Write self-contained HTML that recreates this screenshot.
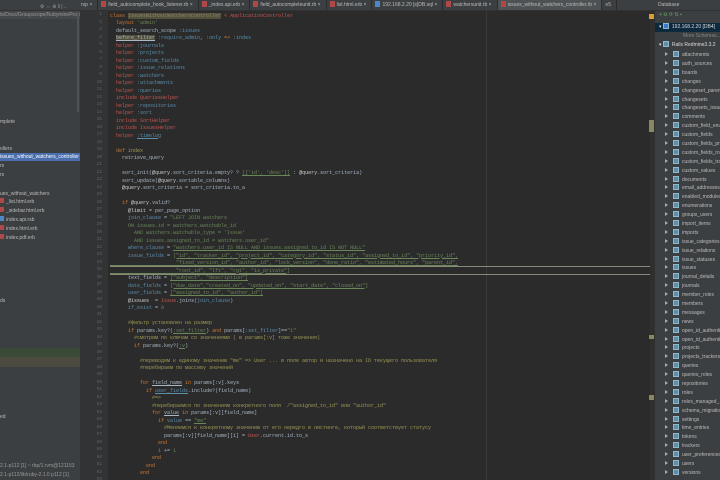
<!DOCTYPE html>
<html><head><meta charset="utf-8"><style>
*{margin:0;padding:0;box-sizing:border-box}
html{width:720px;height:480px;overflow:hidden}
body{width:720px;height:480px;overflow:hidden;background:#2b2b2b;font-family:"Liberation Sans","DejaVu Sans",sans-serif;position:relative}
.abs{position:absolute}
#left{left:0;top:0;width:80px;height:480px;background:#3c3f41;overflow:hidden;color:#bbb;font-size:5px}
#left div.r{position:absolute;left:0;height:8px;line-height:8px;white-space:nowrap}
#tabs{left:80px;top:0;width:575px;height:11px;background:#3c3f41;border-bottom:1px solid #323232;white-space:nowrap;overflow:hidden;font-size:5px;color:#bbb;line-height:11px}
#tabs span{display:inline-block;padding:0 5px 0 3px;border-right:1px solid #2b2b2b}
#tabs i{display:inline-block;width:5px;height:6px;background:#b04848;margin-right:2px;vertical-align:-1px}
#gut{left:80px;top:11px;width:28px;height:469px;background:#313335;font-family:"Liberation Mono",monospace;font-size:4.5px;color:#606366;text-align:right;overflow:hidden}
#gut div{height:7.5px;line-height:7.5px;padding-right:6px}
#code{left:110px;top:12.5px;width:540px;height:468px;overflow:hidden;font-family:"Liberation Mono","DejaVu Sans Mono","Noto Sans CJK SC",monospace;font-size:5px;color:#a9b7c6}
#code div{height:7.5px;line-height:7.5px;white-space:pre;overflow:hidden}
.k{color:#cc7832}.h{color:#c75450}.s{color:#5a8fae}.g{color:#6a8759}.c{color:#a09a55}.w{color:#d0d0d0}.u{text-decoration:underline}
#right{left:655px;top:0;width:65px;height:480px;background:#3c3f41;font-size:5px;color:#bbb;overflow:hidden}
#right .r{position:absolute;left:0;height:9px;line-height:9px;white-space:nowrap}
.ti{display:inline-block;width:6px;height:6px;background:#5f8fa8;border:1px solid #8fb8cc;vertical-align:-1px;margin-right:3px}
.ar{display:inline-block;width:0;height:0;border-left:3px solid #aaa;border-top:2px solid transparent;border-bottom:2px solid transparent;margin:0 5px 0 10px}
</style></head><body>
<div id="left" class="abs">
 <div style="position:absolute;left:0;top:0;width:80px;height:11px;background:#3c3f41;border-bottom:1px solid #323232"></div>
 <div class="r" style="top:3px;left:40px;color:#999">⚙ ⇔ ⊕ ‖ |←</div>
 <div class="r" style="top:11px;width:80px;color:#999;background:#45484a">ts/Docs/Groupscope/RubymineProjects</div>
 <div class="r" style="top:118px">mplete</div>
 <div class="r" style="top:145px">ollers</div>
 <div class="r" style="top:153px;width:80px;background:#4b6eaf;color:#fff">issues_without_watchers_controller</div>
 <div class="r" style="top:162px">rs</div>
 <div class="r" style="top:171px">rs</div>
 <div class="r" style="top:190px">ues_without_watchers</div>
 <div class="r" style="top:198px"><i style="display:inline-block;width:4px;height:5px;background:#b04848;margin-right:2px"></i>_list.html.erb</div>
 <div class="r" style="top:207px"><i style="display:inline-block;width:4px;height:5px;background:#b04848;margin-right:2px"></i>_sidebar.html.erb</div>
 <div class="r" style="top:216px"><i style="display:inline-block;width:4px;height:5px;background:#4a88c7;margin-right:2px"></i>index.api.rsb</div>
 <div class="r" style="top:225px"><i style="display:inline-block;width:4px;height:5px;background:#b04848;margin-right:2px"></i>index.html.erb</div>
 <div class="r" style="top:234px"><i style="display:inline-block;width:4px;height:5px;background:#b04848;margin-right:2px"></i>index.pdf.erb</div>
 <div class="r" style="top:297px">ds</div>
 <div style="position:absolute;left:0;top:348px;width:80px;height:9px;background:#3b4a36"></div>
 <div style="position:absolute;left:0;top:357px;width:80px;height:10px;background:#4d4a40"></div>
 <div class="r" style="top:413px">ed</div>
 <div class="r" style="top:462px;color:#999">2.1-p112 [1] ~ rbp/1.rvm@121153</div>
 <div class="r" style="top:471px;color:#999">2.1-p112/lib/ruby-2.1.0 p112 [1]</div>
 <div style="position:absolute;left:77px;top:12px;width:2px;height:100px;background:#505355"></div>
</div>
<div id="tabs" class="abs"><span style="padding-left:1px">rsp ×</span><span><i></i>field_autocomplete_hook_listener.rb ×</span><span><i></i>_index.api.erb ×</span><span><i></i>field_autocompleteunit.rb ×</span><span><i></i>list.html.erb ×</span><span><i style="background:#4a88c7"></i>192.168.2.20 [s]DB.sql ×</span><span><i></i>watchersunit.rb ×</span><span style="background:#4e5254"><i></i>issues_without_watchers_controller.rb ×</span><span>≡5</span></div>
<div id="gut" class="abs"><div>1</div><div>2</div><div>3</div><div>4</div><div>5</div><div>6</div><div>7</div><div>8</div><div>9</div><div>10</div><div>11</div><div>12</div><div>13</div><div>14</div><div>15</div><div>16</div><div>17</div><div>18</div><div>19</div><div>20</div><div>21</div><div>22</div><div>23</div><div>24</div><div>25</div><div>26</div><div>27</div><div>28</div><div>29</div><div>30</div><div>31</div><div>32</div><div>33</div><div>34</div><div>35</div><div>36</div><div>37</div><div>38</div><div>39</div><div>40</div><div>41</div><div>42</div><div>43</div><div>44</div><div>45</div><div>46</div><div>47</div><div>48</div><div>49</div><div>50</div><div>51</div><div>52</div><div>53</div><div>54</div><div>55</div><div>56</div><div>57</div><div>58</div><div>59</div><div>60</div><div>61</div><div>62</div><div>63</div></div>
<div class="abs" style="left:486px;top:11px;width:1px;height:469px;background:#3a3a3a"></div>
<div class="abs" style="left:110px;top:266px;width:540px;height:1px;background:#8a8a7a"></div>
<div class="abs" style="left:110px;top:274px;width:540px;height:1px;background:#8a8a7a"></div>
<div id="code" class="abs"><div><span class="k">class</span> <span style="background:#52503a;color:#8a8870">IssuesWithoutWatchersController</span> <span class="h">&lt; ApplicationController</span></div><div>  <span class="k">layout</span> <span class="g">'admin'</span></div><div>  default_search_scope <span class="s">:issues</span></div><div>  <span style="background:#52503a" class="u">before_filter</span> <span class="s">:require_admin</span>, <span class="s">:only</span> <span class="k">=&gt;</span> <span class="s">:index</span></div><div>  <span class="h">helper</span> <span class="s">:journals</span></div><div>  <span class="h">helper</span> <span class="s">:projects</span></div><div>  <span class="h">helper</span> <span class="s">:custom_fields</span></div><div>  <span class="h">helper</span> <span class="s">:issue_relations</span></div><div>  <span class="h">helper</span> <span class="s">:watchers</span></div><div>  <span class="h">helper</span> <span class="s">:attachments</span></div><div>  <span class="h">helper</span> <span class="s">:queries</span></div><div>  <span class="h">include QueriesHelper</span></div><div>  <span class="h">helper</span> <span class="s">:repositories</span></div><div>  <span class="h">helper</span> <span class="s">:sort</span></div><div>  <span class="h">include SortHelper</span></div><div>  <span class="h">include IssuesHelper</span></div><div>  <span class="h">helper</span> <span class="s u">:timelog</span></div><div> </div><div>  <span class="k">def</span> <span class="c">index</span></div><div>    retrieve_query</div><div> </div><div>    sort_init(<span class="w">@query</span>.sort_criteria.empty? ? <span class="g u">[['id', 'desc']]</span> : <span class="w">@query</span>.sort_criteria)</div><div>    sort_update(<span class="w">@query</span>.sortable_columns)</div><div>    <span class="w">@query</span>.sort_criteria = sort_criteria.to_a</div><div> </div><div>    <span class="k">if</span> <span class="w">@query</span>.valid?</div><div>      <span class="w">@limit</span> = per_page_option</div><div>      <span class="s">join_clause</span> = <span class="g">"LEFT JOIN watchers</span></div><div><span class="g">      ON issues.id = watchers.watchable_id</span></div><div><span class="g">        AND watchers.watchable_type = 'Issue'</span></div><div><span class="g">        AND issues.assigned_to_id = watchers.user_id"</span></div><div>      <span class="s">where_clause</span> = <span class="g u">"watchers.user_id IS NULL AND issues.assigned_to_id IS NOT NULL"</span></div><div>      <span class="s">issue_fields</span> = <span class="g u">["id", "tracker_id", "project_id", "category_id", "status_id", "assigned_to_id", "priority_id",</span></div><div><span class="g u">                      "fixed_version_id", "author_id", "lock_version", "done_ratio", "estimated_hours", "parent_id",</span></div><div><span class="g u">                      "root_id", "lft", "rgt", "is_private"]</span></div><div>      text_fields = <span class="g u">["subject", "description"]</span></div><div>      <span class="s">date_fields</span> = <span class="g u">["due_date","created_on", "updated_on", "start_date", "closed_on"]</span></div><div>      <span class="s">user_fields</span> = <span class="g u">["assigned_to_id", "author_id"]</span></div><div>      <span class="w">@issues</span>  = <span class="h">Issue</span>.joins(<span class="s">join_clause</span>)</div><div>      <span class="s">if_exist</span> = <span class="g">0</span></div><div> </div><div>      <span class="c">#фильтр установлен на размер</span></div><div>      <span class="k">if</span> params.key?(<span class="g u">:set_filter</span>) <span class="k">and</span> params[<span class="s">:set_filter</span>]==<span class="g">"1"</span></div><div>        <span class="c">#смотрим по ключам со значениями ( в params[:v] тоже значения)</span></div><div>        <span class="k">if</span> params.key?(<span class="g u">:v</span>)</div><div> </div><div>          <span class="c">#переводим к единому значению "me" =&gt; User ... в поле автор и назначено на ID текущего пользователя</span></div><div>          <span class="c">#перебираем по массиву значений</span></div><div> </div><div>          <span class="k">for</span> <span class="u">field_name</span> <span class="k">in</span> params[:v].keys</div><div>            <span class="k">if</span> <span class="s u">user_fields</span>.include?(field_name)</div><div>              <span class="c">#=&gt;</span></div><div>              <span class="c">#перебираемся по значениям конкретного поля  /"assigned_to_id" или "author_id"</span></div><div>              <span class="k">for</span> <span class="u">value</span> <span class="k">in</span> params[:v][field_name]</div><div>                <span class="k">if</span> <span class="s">value</span> == <span class="g u">"me"</span></div><div>                  <span class="c">#Меняемся к конкретному значению от его нередго в листинге, который соответствует статусу</span></div><div>                  params[:v][field_name][i] = <span class="h">User</span>.current.id.to_s</div><div>                <span class="k">end</span></div><div>                <span class="s">i</span> += <span class="g">1</span></div><div>              <span class="k">end</span></div><div>            <span class="k">end</span></div><div>          <span class="k">end</span></div></div>
<div class="abs" style="left:650px;top:11px;width:5px;height:469px;background:#2f2f2f"></div>
<div class="abs" style="left:649px;top:14px;width:5px;height:5px;background:#d8a030"></div>
<div class="abs" style="left:649px;top:120px;width:5px;height:12px;background:#8a8860"></div>
<div class="abs" style="left:649px;top:335px;width:5px;height:4px;background:#8a8860"></div>
<div class="abs" style="left:649px;top:395px;width:5px;height:5px;background:#8a8860"></div>
<div id="right" class="abs">
 <div style="position:absolute;left:0;top:0;width:65px;height:11px;border-bottom:1px solid #323232;line-height:11px;padding-left:3px">Database</div>
 <div class="r" style="top:11px;left:4px;color:#6a6">+ ⊖ ⟳ ⇅ ▪</div>
 <div style="position:absolute;left:0;top:23px;width:65px;height:9px;background:#0d293e"></div>
 <div class="r" style="top:23px;left:4px;color:#ddd">▾ <span class="ti" style="background:#3a7ad0"></span>192.168.2.20 [DB4]</div>
 <div class="r" style="top:32px;left:28px;color:#888">More Schemas...</div>
 <div class="r" style="top:41px;left:4px;color:#ddd">▾ <span class="ti"></span>Rails Redmine3.3.2</div>
 <div class="r" style="top:51px"><span class="ar"></span><span class="ti"></span>attachments</div>
 <div class="r" style="top:60px"><span class="ar"></span><span class="ti"></span>auth_sources</div>
 <div class="r" style="top:69px"><span class="ar"></span><span class="ti"></span>boards</div>
 <div class="r" style="top:78px"><span class="ar"></span><span class="ti"></span>changes</div>
 <div class="r" style="top:87px"><span class="ar"></span><span class="ti"></span>changeset_parents</div>
 <div class="r" style="top:96px"><span class="ar"></span><span class="ti"></span>changesets</div>
 <div class="r" style="top:104px"><span class="ar"></span><span class="ti"></span>changesets_issues</div>
 <div class="r" style="top:113px"><span class="ar"></span><span class="ti"></span>comments</div>
 <div class="r" style="top:122px"><span class="ar"></span><span class="ti"></span>custom_field_enum</div>
 <div class="r" style="top:131px"><span class="ar"></span><span class="ti"></span>custom_fields</div>
 <div class="r" style="top:140px"><span class="ar"></span><span class="ti"></span>custom_fields_proj</div>
 <div class="r" style="top:149px"><span class="ar"></span><span class="ti"></span>custom_fields_roles</div>
 <div class="r" style="top:158px"><span class="ar"></span><span class="ti"></span>custom_fields_track</div>
 <div class="r" style="top:167px"><span class="ar"></span><span class="ti"></span>custom_values</div>
 <div class="r" style="top:176px"><span class="ar"></span><span class="ti"></span>documents</div>
 <div class="r" style="top:184px"><span class="ar"></span><span class="ti"></span>email_addresses</div>
 <div class="r" style="top:193px"><span class="ar"></span><span class="ti"></span>enabled_modules</div>
 <div class="r" style="top:202px"><span class="ar"></span><span class="ti"></span>enumerations</div>
 <div class="r" style="top:211px"><span class="ar"></span><span class="ti"></span>groups_users</div>
 <div class="r" style="top:220px"><span class="ar"></span><span class="ti"></span>import_items</div>
 <div class="r" style="top:229px"><span class="ar"></span><span class="ti"></span>imports</div>
 <div class="r" style="top:238px"><span class="ar"></span><span class="ti"></span>issue_categories</div>
 <div class="r" style="top:247px"><span class="ar"></span><span class="ti"></span>issue_relations</div>
 <div class="r" style="top:256px"><span class="ar"></span><span class="ti"></span>issue_statuses</div>
 <div class="r" style="top:264px"><span class="ar"></span><span class="ti"></span>issues</div>
 <div class="r" style="top:273px"><span class="ar"></span><span class="ti"></span>journal_details</div>
 <div class="r" style="top:282px"><span class="ar"></span><span class="ti"></span>journals</div>
 <div class="r" style="top:291px"><span class="ar"></span><span class="ti"></span>member_roles</div>
 <div class="r" style="top:300px"><span class="ar"></span><span class="ti"></span>members</div>
 <div class="r" style="top:309px"><span class="ar"></span><span class="ti"></span>messages</div>
 <div class="r" style="top:318px"><span class="ar"></span><span class="ti"></span>news</div>
 <div class="r" style="top:327px"><span class="ar"></span><span class="ti"></span>open_id_authenti</div>
 <div class="r" style="top:336px"><span class="ar"></span><span class="ti"></span>open_id_authenti</div>
 <div class="r" style="top:344px"><span class="ar"></span><span class="ti"></span>projects</div>
 <div class="r" style="top:353px"><span class="ar"></span><span class="ti"></span>projects_trackers</div>
 <div class="r" style="top:362px"><span class="ar"></span><span class="ti"></span>queries</div>
 <div class="r" style="top:371px"><span class="ar"></span><span class="ti"></span>queries_roles</div>
 <div class="r" style="top:380px"><span class="ar"></span><span class="ti"></span>repositories</div>
 <div class="r" style="top:389px"><span class="ar"></span><span class="ti"></span>roles</div>
 <div class="r" style="top:398px"><span class="ar"></span><span class="ti"></span>roles_managed_</div>
 <div class="r" style="top:407px"><span class="ar"></span><span class="ti"></span>schema_migrations</div>
 <div class="r" style="top:416px"><span class="ar"></span><span class="ti"></span>settings</div>
 <div class="r" style="top:424px"><span class="ar"></span><span class="ti"></span>time_entries</div>
 <div class="r" style="top:433px"><span class="ar"></span><span class="ti"></span>tokens</div>
 <div class="r" style="top:442px"><span class="ar"></span><span class="ti"></span>trackers</div>
 <div class="r" style="top:451px"><span class="ar"></span><span class="ti"></span>user_preferences</div>
 <div class="r" style="top:460px"><span class="ar"></span><span class="ti"></span>users</div>
 <div class="r" style="top:469px"><span class="ar"></span><span class="ti"></span>versions</div>
</div>
</body></html>
